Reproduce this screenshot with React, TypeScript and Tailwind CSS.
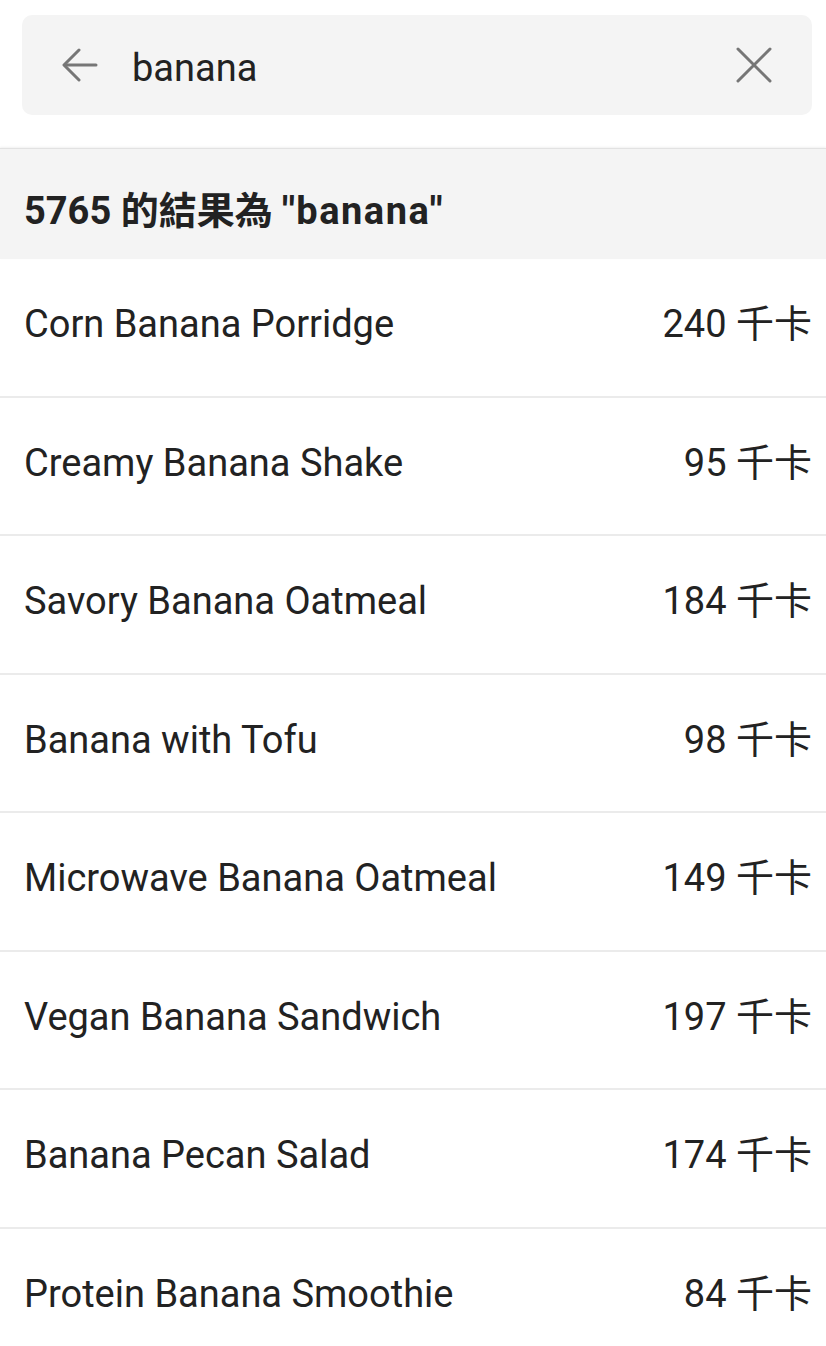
import React from "react";

const FONT = { fontFamily: "Roboto, 'Noto Sans CJK TC', sans-serif" };

const ROWS: { name: string; kcal: number }[] = [
  { name: "Corn Banana Porridge", kcal: 240 },
  { name: "Creamy Banana Shake", kcal: 95 },
  { name: "Savory Banana Oatmeal", kcal: 184 },
  { name: "Banana with Tofu", kcal: 98 },
  { name: "Microwave Banana Oatmeal", kcal: 149 },
  { name: "Vegan Banana Sandwich", kcal: 197 },
  { name: "Banana Pecan Salad", kcal: 174 },
  { name: "Protein Banana Smoothie", kcal: 84 },
];

export default function App() {
  return (
    <div className="w-[826px] h-[1346px] overflow-hidden bg-white text-[#222222]" style={FONT}>
      {/* search bar */}
      <div className="h-[148px] pt-[15px] px-[22px] pr-[14px]">
        <div className="h-[100px] rounded-[10px] bg-[#f4f4f4] flex items-center pl-[40px] pr-[40px]">
          <svg width="36" height="34" viewBox="0 0 36 34" fill="none" stroke="#767676" strokeWidth="3" strokeLinecap="round" strokeLinejoin="round">
            <path d="M34 17H3" />
            <path d="M17 2L2 17l15 15" />
          </svg>
          <span className="ml-[34px] pt-[6px] text-[38px] leading-none flex-1">banana</span>
          <svg width="36" height="36" viewBox="0 0 36 36" fill="none" stroke="#767676" strokeWidth="3" strokeLinecap="round">
            <path d="M2 2l32 32M34 2L2 34" />
          </svg>
        </div>
      </div>

      {/* results header */}
      <div className="h-[111px] bg-[#f4f4f4] border-t border-[#e2e2e2] shadow-[0_-1px_2px_rgba(0,0,0,0.06)] flex items-center px-[24px] pt-[14px]">
        <span className="text-[38px] font-bold leading-none">
          5765 的結果為 <span className="tracking-[0.04em]">''banana''</span>
        </span>
      </div>

      {/* rows */}
      {ROWS.map((r) => (
        <div key={r.name} className="h-[138.5px] border-b-2 border-[#ebebeb] flex items-center justify-between pl-[24px] pr-[14px] pb-[6px]">
          <span className="text-[38px] leading-none">{r.name}</span>
          <span className="text-[38px] leading-none">{r.kcal} 千卡</span>
        </div>
      ))}
    </div>
  );
}
